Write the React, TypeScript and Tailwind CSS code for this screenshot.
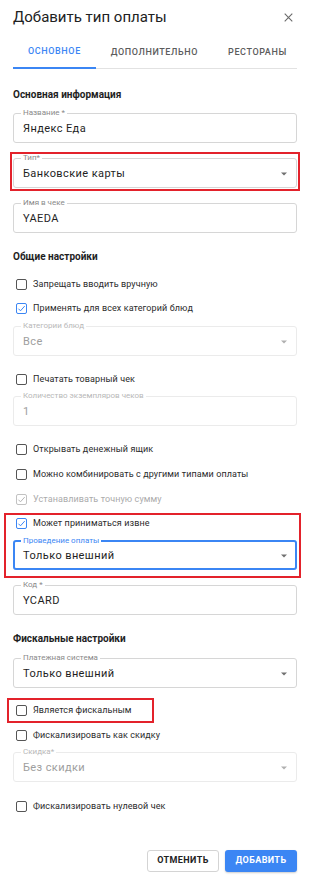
import React from "react";

function Box({ checked, disabled }: { checked?: boolean; disabled?: boolean }) {
  const border = disabled
    ? "border-[#c2c2c2]"
    : checked
    ? "border-[#3b86f4]"
    : "border-[#555555]";
  const stroke = disabled ? "#b5b5b5" : "#3b86f4";
  return (
    <span
      className={`w-[11px] h-[11px] border-[1.5px] ${border} rounded-[2px] flex items-center justify-center shrink-0 bg-white`}
    >
      {checked && (
        <svg width="9" height="9" viewBox="0 0 9 9">
          <path d="M1.4 4.7 L3.5 6.8 L7.7 2.1" fill="none" stroke={stroke} strokeWidth="1" />
        </svg>
      )}
    </span>
  );
}

function CheckRow({
  label,
  checked,
  disabled,
  h = "h-[24px]",
}: {
  label: string;
  checked?: boolean;
  disabled?: boolean;
  h?: string;
}) {
  return (
    <div className={`${h} flex items-center pl-[3px] gap-[6px]`}>
      <Box checked={checked} disabled={disabled} />
      <span
        className={`text-[9px] leading-[11px] tracking-[0.1px] ${disabled ? "text-[#ababab]" : "text-[#2b2b2b]"}`}
      >
        {label}
      </span>
    </div>
  );
}

function Arrow({ color }: { color: string }) {
  return (
    <svg width="6" height="4" viewBox="0 0 6 4" className="shrink-0 mt-[1px]">
      <path d="M0 0.5 L6 0.5 L3 3.5 Z" fill={color} />
    </svg>
  );
}

function Field({
  label,
  value,
  select,
  disabled,
  focused,
}: {
  label: string;
  value: string;
  select?: boolean;
  disabled?: boolean;
  focused?: boolean;
}) {
  const border = focused
    ? "border-2 border-[#3b86f4] px-[8px]"
    : disabled
    ? "border border-[#ebebeb] px-[9px]"
    : "border border-[#d6d6d6] px-[9px]";
  const labelCls = focused
    ? "text-[#3b86f4]"
    : disabled
    ? "text-[#b8b8b8]"
    : "text-[#8a8a8a]";
  const valueCls = disabled ? "text-[#9e9e9e]" : "text-[#1f1f1f]";
  return (
    <fieldset className={`${border} rounded-[3px] min-w-0`}>
      <legend className={`ml-[-2px] px-[2px] text-[8px] leading-[8px] ${labelCls}`}>{label}</legend>
      <div className={`${focused ? "h-[21px]" : "h-[22px]"} flex items-center justify-between`}>
        <span className={`text-[11px] leading-[13px] tracking-[0.4px] ${valueCls}`}>{value}</span>
        {select && <Arrow color={disabled ? "#b0b0b0" : "#707070"} />}
      </div>
      <div className={focused ? "h-[2px]" : "h-[3px]"} />
    </fieldset>
  );
}

function Heading({ children }: { children: React.ReactNode }) {
  return (
    <div className="h-[20px] flex items-center text-[10px] font-bold text-[#1e1e1e]">{children}</div>
  );
}

export default function App() {
  return (
    <div className="w-[310px] h-[875px] bg-white px-[13px] font-['Roboto',sans-serif] overflow-hidden">
      <div className="h-[34px] flex items-center justify-between">
        <span className="text-[15px] leading-[18px] text-[#212121]">Добавить тип оплаты</span>
        <svg width="9" height="9" viewBox="0 0 9 9" className="mr-[4px]">
          <path d="M0.7 0.7 L8.3 8.3 M8.3 0.7 L0.7 8.3" stroke="#6a6a6a" strokeWidth="1.1" />
        </svg>
      </div>

      <div className="mt-[3px] flex border-b border-[#e2e2e2]">
        <div className="h-[32px] -mb-px border-b-2 border-[#3b86f4] px-[15px] flex items-center text-[9px] font-medium tracking-[0.6px] text-[#3b86f4]">
          ОСНОВНОЕ
        </div>
        <div className="h-[32px] -mb-px px-[15px] flex items-center text-[9px] font-medium tracking-[0.6px] text-[#5c5c5c]">
          ДОПОЛНИТЕЛЬНО
        </div>
        <div className="h-[32px] -mb-px px-[15px] flex items-center text-[9px] font-medium tracking-[0.6px] text-[#5c5c5c]">
          РЕСТОРАНЫ
        </div>
      </div>

      <div className="mt-[15px]">
        <Heading>Основная информация</Heading>
      </div>
      <div className="mt-[5px]">
        <Field label="Название *" value="Яндекс Еда" />
      </div>
      <div className="mt-[9px] -mx-[3px] px-[1px] pb-[1px] border-2 border-[#e3222b]">
        <Field label="Тип*" value="Банковские карты" select />
      </div>
      <div className="mt-[8px]">
        <Field label="Имя в чеке" value="YAEDA" />
      </div>

      <div className="mt-[13px]">
        <Heading>Общие настройки</Heading>
      </div>
      <div className="mt-[6px]">
        <CheckRow label="Запрещать вводить вручную" />
        <CheckRow label="Применять для всех категорий блюд" checked />
      </div>
      <div className="mt-[2px]">
        <Field label="Категории блюд" value="Все" select disabled />
      </div>
      <div className="mt-[11px]">
        <CheckRow label="Печатать товарный чек" />
      </div>
      <div className="mt-[1px]">
        <Field label="Количество экземпляров чеков" value="1" disabled />
      </div>
      <div className="mt-[11px] flex flex-col gap-[1px]">
        <CheckRow label="Открывать денежный ящик" />
        <CheckRow label="Можно комбинировать с другими типами оплаты" />
        <CheckRow label="Устанавливать точную сумму" checked disabled />
      </div>

      <div className="mt-[2px] -ml-[9px] -mr-[4px] pl-[7px] pr-[2px] pb-[6px] border-2 border-[#e3222b]">
        <CheckRow label="Может приниматься извне" checked h="h-[16px]" />
        <div className="mt-[6px]">
          <Field label="Проведение оплаты" value="Только внешний" select focused />
        </div>
      </div>
      <div className="mt-[3px]">
        <Field label="Код *" value="YCARD" />
      </div>

      <div className="mt-[13px]">
        <Heading>Фискальные настройки</Heading>
      </div>
      <div className="mt-[6px]">
        <Field label="Платежная система" value="Только внешний" select />
      </div>
      <div className="mt-[10px] -ml-[6px] w-[147px] pl-[4px] border-2 border-[#e3222b]">
        <CheckRow label="Является фискальным" h="h-[21px]" />
      </div>
      <CheckRow label="Фискализировать как скидку" />
      <div className="mt-[1px]">
        <Field label="Скидка*" value="Без скидки" select disabled />
      </div>
      <div className="mt-[12px]">
        <CheckRow label="Фискализировать нулевой чек" />
      </div>

      <div className="mt-[32px] flex justify-end gap-[6px]">
        <button className="w-[72px] h-[22px] border border-[#d4d4d4] rounded-[3px] bg-white text-[9px] font-bold tracking-[0.4px] text-[#222222] flex items-center justify-center">
          ОТМЕНИТЬ
        </button>
        <button className="w-[72px] h-[22px] rounded-[3px] bg-[#3b86f4] text-[9px] font-bold tracking-[0.4px] text-white flex items-center justify-center shadow-[0_1px_2px_rgba(0,0,0,0.2)]">
          ДОБАВИТЬ
        </button>
      </div>
    </div>
  );
}
